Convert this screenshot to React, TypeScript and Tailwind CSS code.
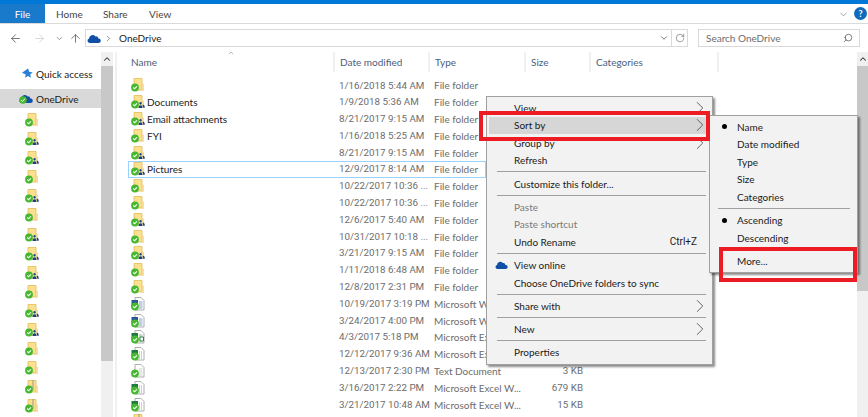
import { ChevronRight, ArrowLeft, ArrowRight, ArrowUp, ChevronDown, ChevronUp, RotateCw, Search } from 'lucide-react';

type IconKind = 'folder' | 'shared' | 'word' | 'excel' | 'excel2' | 'text' | 'zip';

const rows: { name: string; date: string; type: string; size?: string; icon: IconKind }[] = [
  { name: '', date: '1/16/2018 5:44 AM', type: 'File folder', icon: 'folder' },
  { name: 'Documents', date: '1/9/2018 5:36 AM', type: 'File folder', icon: 'shared' },
  { name: 'Email attachments', date: '8/21/2017 9:15 AM', type: 'File folder', icon: 'shared' },
  { name: 'FYI', date: '1/16/2018 5:25 AM', type: 'File folder', icon: 'folder' },
  { name: '', date: '8/21/2017 9:15 AM', type: 'File folder', icon: 'shared' },
  { name: 'Pictures', date: '12/9/2017 8:14 AM', type: 'File folder', icon: 'shared' },
  { name: '', date: '10/22/2017 10:36 ...', type: 'File folder', icon: 'folder' },
  { name: '', date: '10/22/2017 10:36 ...', type: 'File folder', icon: 'folder' },
  { name: '', date: '12/6/2017 5:40 AM', type: 'File folder', icon: 'shared' },
  { name: '', date: '10/31/2017 10:18 ...', type: 'File folder', icon: 'folder' },
  { name: '', date: '3/21/2017 9:15 AM', type: 'File folder', icon: 'shared' },
  { name: '', date: '1/11/2018 6:48 AM', type: 'File folder', icon: 'folder' },
  { name: '', date: '12/8/2017 2:31 PM', type: 'File folder', icon: 'folder' },
  { name: '', date: '10/19/2017 3:19 PM', type: 'Microsoft Word D...', icon: 'word' },
  { name: '', date: '3/24/2017 4:00 PM', type: 'Microsoft Word D...', icon: 'word' },
  { name: '', date: '4/3/2017 5:18 PM', type: 'Microsoft Excel W...', icon: 'excel2' },
  { name: '', date: '12/12/2017 9:36 AM', type: 'Microsoft Excel W...', icon: 'excel' },
  { name: '', date: '12/13/2017 2:30 PM', type: 'Text Document', size: '3 KB', icon: 'text' },
  { name: '', date: '3/16/2017 2:22 PM', type: 'Microsoft Excel W...', size: '679 KB', icon: 'excel' },
  { name: '', date: '3/21/2017 10:48 AM', type: 'Microsoft Excel W...', size: '15 KB', icon: 'excel' },
  { name: '', date: '', type: '', icon: 'zip' },
];

const navIcons: IconKind[] = [
  'folder', 'shared', 'shared', 'folder', 'shared', 'folder', 'shared', 'shared', 'shared', 'folder',
  'shared', 'shared', 'folder', 'folder', 'zip', 'zip', 'zip',
];

function Cloud({ className }: { className?: string }) {
  return (
    <svg viewBox="0 0 16 10" className={className}>
      <path d="M3 10a2.6 2.6 0 0 1-.6-5.1A4 4 0 0 1 9.6 2.6 3 3 0 0 1 13 5a2.5 2.5 0 0 1 .5 5z" fill="#0f4fa8" />
    </svg>
  );
}

function FileIcon({ kind }: { kind: IconKind }) {
  const isDoc = kind === 'word' || kind === 'excel' || kind === 'excel2' || kind === 'text';
  const accent = kind === 'word' ? '#2a5699' : '#1f7a3e';
  return (
    <svg viewBox="0 0 14 14" className="w-[14px] h-[14px] shrink-0">
      {!isDoc && (
        <>
          <path d="M3 .5h8v11.500h-8z" fill="#fbe08f" stroke="#e5bd55" strokeWidth="0.8" />
          <path d="M11 6h1.500v6.500h-1.500z" fill="#fbe8ad" stroke="#e8c873" strokeWidth="0.5" />
        </>
      )}
      {kind === 'zip' && <path d="M8 .5v9" stroke="#8a8a8a" strokeWidth="1.600" strokeDasharray="1 1" />}
      {kind === 'shared' && (
        <path d="M7.500 13c0-2 1.200-2.700 2-2.700s2 .7 2 2.700zM9.500 9.500a1.200 1.200 0 1 1 .1 0zM11.500 9.800h.8c.8 0 1.500.8 1.500 3h-1.500z" fill="#1b3f8f" />
      )}
      {isDoc && (
        <>
          <path d="M4 .5h6l3 3v9.500h-9z" fill="#fff" stroke="#9a9a9a" strokeWidth="0.8" />
          <path d="M8 5h3.500M8 7h3.500M8 9h3.500M8 11h3.500" stroke={kind === 'text' ? '#aaa' : accent} strokeWidth="0.7" strokeDasharray={kind === 'excel' ? '1 1' : undefined} opacity="0.8" />
          {kind === 'excel2' && <path d="M9 7h3.500v4h-3.500z" fill="#fff" stroke="#1f7a3e" strokeWidth="0.9" />}
          {kind !== 'text' && <path d="M.5 3h6.500v6h-6.500z" fill={accent} />}
        </>
      )}
      <circle cx="4" cy="9.500" r="3.900" fill="#45b82f" />
      <path d="M2.300 9.500l1.300 1.300 2.300-2.500" fill="none" stroke="#fff" strokeWidth="1.100" />
    </svg>
  );
}

function MenuItem({ label, arrow, disabled, shortcut, highlight }: { label: string; arrow?: boolean; disabled?: boolean; shortcut?: string; highlight?: boolean }) {
  return (
    <div className={`h-[17.500px] flex items-center pl-[25px] pr-[5px] ${highlight ? 'bg-[#d6d6d6]' : ''} ${disabled ? 'text-[#7a7a7a]' : 'text-[#1a1a1a]'}`}>
      <span className="flex-1">{label}</span>
      {shortcut && <span className="pr-[8px] font-['Roboto',sans-serif] text-[10px]">{shortcut}</span>}
      {arrow && <ChevronRight size={22} strokeWidth={1} className="text-[#555] -mr-[6px] -my-[3px]" />}
    </div>
  );
}

function Sep() {
  return <div className="h-px bg-[#a0a0a0] ml-[8px] mr-[4px] my-[2.400px]" />;
}

function SortItem({ label, dot }: { label: string; dot?: boolean }) {
  return (
    <div className="h-[17.500px] flex items-center pl-[27px] relative text-[#1a1a1a]">
      {dot && <span className="absolute left-[12px] top-[6px] w-[5px] h-[5px] rounded-full bg-black" />}
      {label}
    </div>
  );
}

function Header({ label, width, pad }: { label: string; width: string; pad: string }) {
  return (
    <div className={`${width} ${pad} h-[20px] shrink-0 flex items-center border-r-2 border-[#f0f0f0] text-[#4c607a]`}>{label}</div>
  );
}

function Scrollbar({ className, thumb }: { className: string; thumb: string }) {
  return (
    <div className={`bg-[#f0f0f0] flex flex-col shrink-0 ${className}`}>
      <div className="h-[14px] flex items-center justify-center">
        <ChevronUp size={10} strokeWidth={2.500} className="text-[#333]" />
      </div>
      <div className={`bg-[#c8c8c8] ${thumb}`} />
    </div>
  );
}

export default function App() {
  return (
    <div className="relative w-[868px] h-[417px] overflow-hidden bg-white text-[10px] leading-none text-[#1a1a1a] font-['Lato',sans-serif]">
      <div className="h-[4px] bg-[#0078d7]" />

      <div className="h-[20px] flex items-center border-b border-[#dadada] relative">
        <div className="w-[45px] h-[19px] bg-[#1979ca] text-white flex items-center justify-center">File</div>
        <div className="ml-[11px] w-[47px] text-[#444]">Home</div>
        <div className="w-[46px] text-[#444]">Share</div>
        <div className="text-[#444]">View</div>
        <ChevronDown size={11} className="absolute right-[19px] top-[5px] text-[#9a9a9a]" />
        <div className="absolute right-[1px] top-[3px] w-[13px] h-[13px] rounded-full bg-[#0f6cbd] text-white text-[9px] font-bold flex items-center justify-center">?</div>
      </div>

      <div className="h-[28px] flex items-center relative">
        <ArrowLeft size={13} strokeWidth={1.500} className="ml-[9px] text-[#5a5a5a]" />
        <ArrowRight size={13} strokeWidth={1.500} className="ml-[11px] text-[#d0d0d0]" />
        <ChevronDown size={9} strokeWidth={2} className="ml-[9px] text-[#777]" />
        <ArrowUp size={13} strokeWidth={1.500} className="ml-[5px] text-[#5a5a5a]" />
        <div className="ml-[3px] w-[603px] h-[18px] border border-[#d9d9d9] flex items-center">
          <Cloud className="ml-[1px] w-[14px] h-[9px]" />
          <ChevronRight size={9} strokeWidth={2} className="ml-[3px] text-[#666]" />
          <span className="ml-[6px]">OneDrive</span>
          <ChevronDown size={10} strokeWidth={2} className="ml-auto mr-[2px] text-[#555]" />
          <div className="w-[16px] h-full border-l border-[#d9d9d9] flex items-center justify-center">
            <RotateCw size={10} strokeWidth={1.500} className="text-[#666]" />
          </div>
        </div>
        <div className="ml-[10px] w-[162px] h-[18px] border border-[#d9d9d9] flex items-center pl-[7px] text-[#6d6d6d]">
          <span className="flex-1">Search OneDrive</span>
          <Search size={10} strokeWidth={1.800} className="mr-[6px] text-[#555] scale-x-[-1]" />
        </div>
      </div>

      <div className="flex h-[365px]">
        <div className="w-[101px] shrink-0 overflow-hidden">
          <div className="h-[12px]" />
          <div className="h-[19px] flex items-center pl-[21px] whitespace-nowrap">
            <svg viewBox="0 0 12 12" className="w-[12px] h-[12px]">
              <path d="M7 .5l1.400 3.400 3.300.3-2.500 2.200.8 3.400L7 8.100 4 9.800l.8-3.400L1 4.700z" fill="#2b7fd6" />
            </svg>
            <span className="ml-[3px]">Quick access</span>
          </div>
          <div className="h-[6px]" />
          <div className="h-[19px] bg-[#d9d9d9] flex items-center pl-[19px] relative">
            <Cloud className="w-[14px] h-[9px]" />
            <svg viewBox="0 0 8 8" className="absolute left-[19px] top-[7px] w-[8px] h-[8px]">
              <circle cx="4" cy="4" r="3.800" fill="#45b82f" />
              <path d="M2 4l1.500 1.500 2.500-3" fill="none" stroke="#fff" />
            </svg>
            <span className="ml-[3px]">OneDrive</span>
          </div>
          <div className="flex flex-col gap-[5.100px] pt-[5px] pl-[25px]">
            {navIcons.map((k, i) => (
              <FileIcon key={i} kind={k} />
            ))}
          </div>
        </div>

        <Scrollbar className="w-[12px]" thumb="h-[295px]" />

        <div className="flex-1 min-w-0 ml-[2px] border-l-2 border-[#f0f0f0] pl-[13px] relative">
          <ChevronUp size={8} strokeWidth={1.500} className="absolute left-[110px] -top-[3px] text-[#777]" />
          <div className="flex h-[20px]">
            <Header label="Name" width="w-[205px]" pad="pl-[1px]" />
            <Header label="Date modified" width="w-[95px]" pad="pl-[5px]" />
            <Header label="Type" width="w-[96px]" pad="pl-[5px]" />
            <Header label="Size" width="w-[65px]" pad="pl-[5px]" />
            <Header label="Categories" width="w-[128px]" pad="pl-[5px]" />
          </div>
          <div className="pt-[5px]">
            {rows.map((r, i) => (
              <div
                key={i}
                className={`h-[16.800px] flex items-center text-[#6d6d6d] -ml-[2px] ${r.name === 'Pictures' ? 'ring-1 ring-inset ring-[#99d1ff] w-[358px]' : ''}`}
              >
                <div className="w-[211px] shrink-0 flex items-center pl-[3px] text-[#1a1a1a]">
                  <FileIcon kind={r.icon} />
                  <span className="ml-[2px]">{r.name}</span>
                </div>
                <div className="w-[95px] shrink-0 whitespace-nowrap font-['Roboto',sans-serif] text-[9.800px]">{r.date}</div>
                <div className="w-[96px] shrink-0 whitespace-nowrap">{r.type}</div>
                <div className="w-[53px] shrink-0 text-right font-['Roboto',sans-serif] text-[9.800px]">{r.size}</div>
              </div>
            ))}
          </div>
        </div>

        <Scrollbar className="w-[11px]" thumb="h-[225px]" />
      </div>

      {/* context menu */}
      <div className="absolute left-[486px] top-[96px] w-[227px] bg-[#f2f2f2] border border-[#a0a0a0] shadow-[2px_2px_2px_rgba(0,0,0,0.45)] pt-[2px] pl-[2px] pr-[2px]">
        <MenuItem label="View" arrow />
        <MenuItem label="Sort by" arrow highlight />
        <MenuItem label="Group by" arrow />
        <MenuItem label="Refresh" />
        <Sep />
        <MenuItem label="Customize this folder..." />
        <Sep />
        <MenuItem label="Paste" disabled />
        <MenuItem label="Paste shortcut" disabled />
        <MenuItem label="Undo Rename" shortcut="Ctrl+Z" />
        <Sep />
        <div className="relative">
          <Cloud className="absolute left-[6px] top-[5px] w-[13px] h-[8px]" />
          <MenuItem label="View online" />
        </div>
        <MenuItem label="Choose OneDrive folders to sync" />
        <Sep />
        <MenuItem label="Share with" arrow />
        <Sep />
        <MenuItem label="New" arrow />
        <Sep />
        <MenuItem label="Properties" />
        <div className="h-[3px]" />
      </div>

      {/* sort by submenu */}
      <div className="absolute left-[709px] top-[115px] w-[149px] bg-[#f2f2f2] border border-[#a0a0a0] shadow-[2px_2px_2px_rgba(0,0,0,0.45)] pt-[2px]">
        <SortItem label="Name" dot />
        <SortItem label="Date modified" />
        <SortItem label="Type" />
        <SortItem label="Size" />
        <SortItem label="Categories" />
        <div className="h-px bg-[#a0a0a0] ml-[8px] mr-[7px] my-[2.600px]" />
        <SortItem label="Ascending" dot />
        <SortItem label="Descending" />
        <div className="h-[6px]" />
        <SortItem label="More..." />
        <div className="h-[2px]" />
      </div>

      {/* red callouts */}
      <div className="absolute left-[479px] top-[111px] w-[231px] h-[30px] border-4 border-[#ed1c24]" />
      <div className="absolute left-[719px] top-[247px] w-[138px] h-[35px] border-4 border-[#ed1c24]" />
    </div>
  );
}
